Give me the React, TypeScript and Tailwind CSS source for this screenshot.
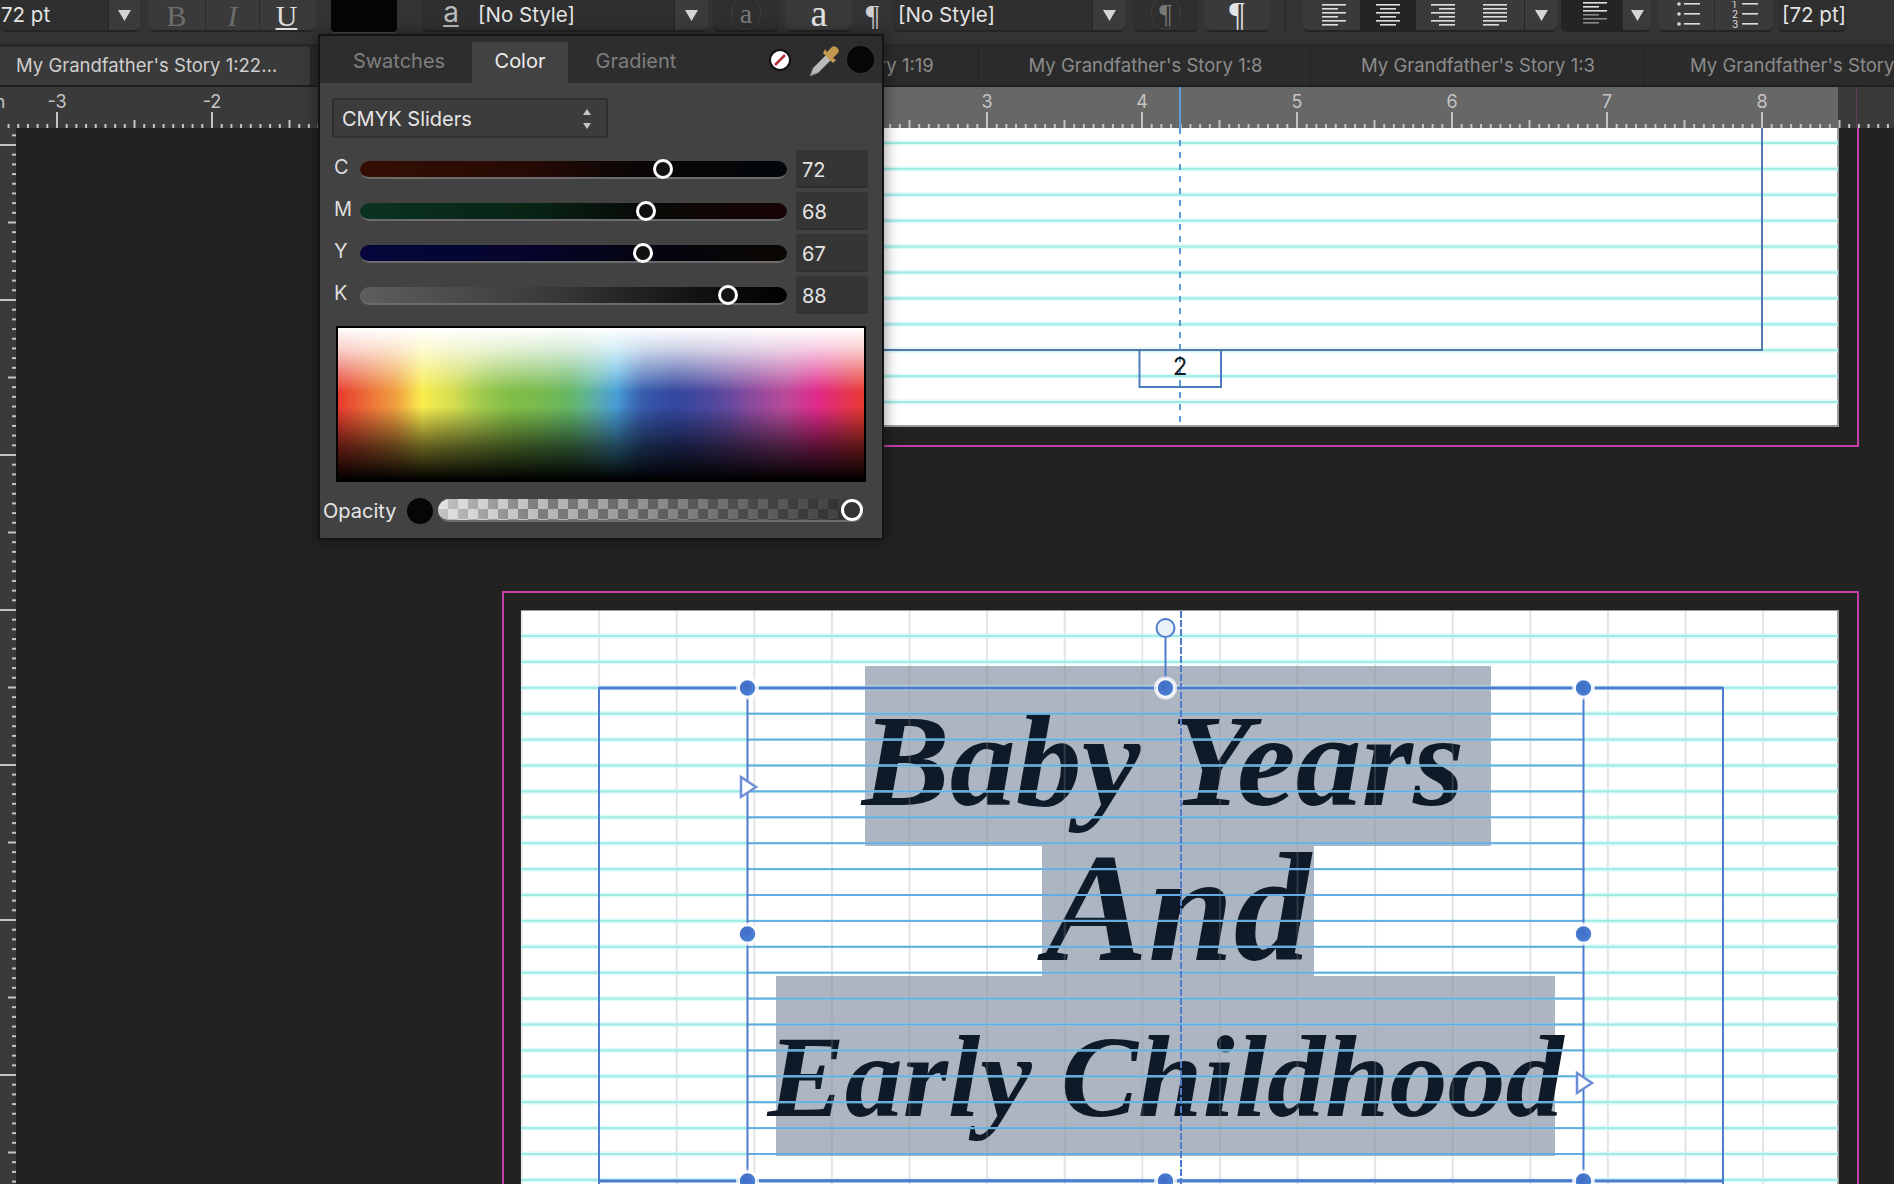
import { ReactNode } from 'react'

const UNIT = 155
const ORIGIN_X = 522
const ORIGIN_Y = 145
const STEP = UNIT / 16

const sans = 'font-["Inter","Liberation_Sans",sans-serif]'
const serif = 'font-["Liberation_Serif",serif]'

function Arrow() {
  return (
    <svg width="13" height="11" viewBox="0 0 13 11">
      <path d="M0 0h13L6.5 11z" fill="#d4d4d4" />
    </svg>
  )
}

function ArrowBox({ width, className = 'bg-[#3b3b3b]' }: { width: string; className?: string }) {
  return (
    <div className={`flex h-full flex-none items-center justify-center border-l border-[#262626] ${className} ${width}`}>
      <Arrow />
    </div>
  )
}

function Group({ className, children }: { className: string; children: ReactNode }) {
  return (
    <div className={`flex h-[32px] flex-none overflow-hidden rounded-b-md border-b-2 border-[#242424] ${className}`}>
      {children}
    </div>
  )
}

const leftRows = [[0, 24], [0, 16], [0, 24], [0, 16], [0, 24], [0, 16]]
const centerRows = [[0, 24], [4, 16], [0, 24], [4, 16], [0, 24], [4, 16]]
const rightRows = [[0, 24], [8, 16], [0, 24], [8, 16], [0, 24], [8, 16]]
const justifyRows = [[0, 24], [0, 24], [0, 24], [0, 24], [0, 24], [0, 16]]

function AlignIcon({ rows, fade }: { rows: number[][]; fade?: boolean }) {
  return (
    <svg width="24" height="26" viewBox="0 0 24 26">
      {rows.map(([x, w], i) => (
        <rect key={i} x={x} y={(fade ? 0 : 2) + i * 4} width={w} height="1.6" fill={fade && i > 2 ? '#8a8a8a' : '#dedede'} />
      ))}
    </svg>
  )
}

function ListIcon({ numbered }: { numbered?: boolean }) {
  return (
    <svg width="30" height="28" viewBox="0 0 30 28">
      {[2, 12, 22].map((y, i) => (
        <g key={y}>
          {numbered ? (
            <text x="3" y={y + 5} fontSize="10" fill="#dcdcdc" fontFamily="Inter">
              {i + 1}
            </text>
          ) : (
            <circle cx="8" cy={y + 1} r="1.8" fill="#dcdcdc" />
          )}
          <rect x="13" y={y} width="16" height="1.6" fill="#dedede" />
        </g>
      ))}
    </svg>
  )
}

function Ring({ children }: { children: ReactNode }) {
  return (
    <div className="mt-[-4px] flex h-[34px] w-[30px] flex-none items-center justify-center rounded-full border border-[#3e3e3e] pt-[2px]">
      {children}
    </div>
  )
}

function Toolbar() {
  return (
    <header className="flex h-[46px] flex-none items-start border-b-2 border-[#272727] bg-[#333333] text-[20.5px] text-[#e4e4e4]">
      <Group className="w-[140px] bg-[#2f2f2f]">
        <div className="flex-1 pl-[1px] leading-[29px]">72 pt</div>
        <ArrowBox width="w-[32px]" />
      </Group>
      <Group className="ml-[8px] w-[168px] bg-[#3a3a3a]">
        <div className={`flex w-[58px] items-center justify-center border-r border-[#2c2c2c] text-[30px] text-[#6c6c6c] ${serif}`}>B</div>
        <div className={`flex w-[54px] items-center justify-center border-r border-[#2c2c2c] text-[30px] italic text-[#6c6c6c] ${serif}`}>I</div>
        <div className={`flex w-[56px] items-center justify-center pr-[3px] text-[30px] text-[#dedede] underline decoration-2 underline-offset-2 ${serif}`}>U</div>
      </Group>
      <div className="ml-[15px] h-[33px] w-[66px] flex-none rounded-b-sm border-b border-[#4a4a4a] bg-[#050505]" />
      <Group className="ml-[25px] w-[286px] bg-[#2f2f2f]">
        <div className={`flex w-[56px] flex-none items-start justify-center pl-[2px] text-[28px] leading-[25px] text-[#b9b9b9] underline decoration-2 underline-offset-[3px] ${sans}`}>a</div>
        <div className="flex-1 leading-[29px]">[No Style]</div>
        <ArrowBox width="w-[34px]" />
      </Group>
      <Group className={`ml-[5px] w-[66px] items-center justify-center bg-[#2f2f2f] text-[28px] text-[#7a7a7a] ${serif}`}>
        <Ring>a</Ring>
      </Group>
      <Group className={`ml-[7px] w-[66px] items-center justify-center bg-[#3a3a3a] pb-[4px] text-[38px] text-[#e4e4e4] ${serif}`}>a</Group>
      <div className={`flex h-[28px] w-[41px] flex-none items-center justify-center text-[30px] text-[#cfcfcf] ${serif}`}>¶</div>
      <Group className="w-[232px] bg-[#2f2f2f]">
        <div className="flex-1 pl-[5px] leading-[29px]">[No Style]</div>
        <ArrowBox width="w-[33px]" />
      </Group>
      <Group className={`ml-[8px] w-[65px] items-center justify-center bg-[#2f2f2f] text-[28px] text-[#7a7a7a] ${serif}`}>
        <Ring>¶</Ring>
      </Group>
      <Group className={`ml-[6px] w-[66px] items-center justify-center bg-[#3a3a3a] pb-[3px] text-[34px] text-[#e4e4e4] ${serif}`}>¶</Group>
      <div className="ml-[15px] h-[32px] w-[1px] flex-none bg-[#262626]" />
      <Group className="ml-[17px] w-[254px] bg-[#3a3a3a]">
        <div className="flex w-[57px] items-center justify-center pl-[4px]"><AlignIcon rows={leftRows} /></div>
        <div className="flex w-[56px] items-center justify-center bg-[#242424]"><AlignIcon rows={centerRows} /></div>
        <div className="flex w-[54px] items-center justify-center"><AlignIcon rows={rightRows} /></div>
        <div className="flex w-[54px] items-center justify-center pr-[4px]"><AlignIcon rows={justifyRows} /></div>
        <ArrowBox width="w-[33px]" />
      </Group>
      <Group className="ml-[4px] w-[90px] bg-[#242424]">
        <div className="flex w-[61px] items-center justify-center pl-[6px]"><AlignIcon rows={leftRows} fade /></div>
        <ArrowBox width="w-[29px]" />
      </Group>
      <Group className="ml-[7px] w-[115px] bg-[#3a3a3a]">
        <div className="flex w-[57px] items-center justify-center border-r border-[#2c2c2c]"><ListIcon /></div>
        <div className="flex w-[58px] items-center justify-center"><ListIcon numbered /></div>
      </Group>
      <Group className="ml-[5px] flex-1 bg-[#2f2f2f] pl-[4px] leading-[29px]">[72 pt]</Group>
    </header>
  )
}

function TabStrip() {
  const tabs = [
    { label: '', width: 'w-[335px]' },
    { label: "My Grandfather's Story 1:19", width: 'w-[333px]' },
    { label: "My Grandfather's Story 1:8", width: 'w-[332px]' },
    { label: "My Grandfather's Story 1:3", width: 'w-[333px]' },
  ]
  return (
    <nav className="flex h-[41px] flex-none items-stretch border-b-2 border-[#1f1f1f] bg-[#2b2b2b] pt-[1px] text-[18.5px] whitespace-nowrap">
      <div className="flex w-[311px] flex-none items-center border-r border-[#222] bg-[#3a3a3a] pl-[16px] text-[#cfcfcf]">
        My Grandfather's Story 1:22…
      </div>
      {tabs.map((t, i) => (
        <div key={i} className={`flex flex-none items-center justify-center border-r border-[#222] pl-[2px] text-[#8c8c8c] ${t.width}`}>
          {t.label}
        </div>
      ))}
      <div className="flex min-w-0 flex-1 items-center overflow-hidden pl-[46px] text-[#8c8c8c]">My Grandfather's Story</div>
    </nav>
  )
}

function TopRuler() {
  const ticks = []
  for (let i = 0; i * STEP < 1894 + UNIT * 4; i++) {
    const x = ORIGIN_X - UNIT * 4 + i * STEP
    const top = i % 16 === 0 ? 25 : i % 8 === 0 ? 33 : 37
    ticks.push(<rect key={i} x={x - 1} y={top} width="2" height={41 - top} fill="#c4c4c4" />)
  }
  const labels = [-3, -2, -1, 0, 1, 2, 3, 4, 5, 6, 7, 8]
  return (
    <div className="relative h-[41px] flex-none bg-[#3a3a3a]">
      <div className="absolute left-[521px] top-0 h-[41px] w-[1317px] border-t-2 border-[#5c6668] bg-[#676767]" />
      <div className="absolute left-[1856px] top-0 h-[41px] w-[1px] bg-[#5b3f58]" />
      <svg width="1894" height="41" className="absolute left-0 top-0" fontFamily="Inter" fontSize="18" fill="#c4c4c4" textAnchor="middle">
        {ticks}
        {labels.map((n) => (
          <text key={n} x={ORIGIN_X + n * UNIT} y="21">
            {n}
          </text>
        ))}
        <text x="0" y="21">n</text>
        <rect x="1179" y="0" width="2" height="41" fill="#5f9bd6" />
      </svg>
    </div>
  )
}

function SideRuler() {
  const ticks = []
  for (let i = -16; i * STEP < 1100; i++) {
    const y = ORIGIN_Y - 128 + i * STEP
    const left = i % 16 === 0 ? 0 : i % 8 === 0 ? 8 : 12
    ticks.push(<rect key={i} x={left} y={y - 1} width={16 - left} height="2" fill="#c4c4c4" />)
  }
  return (
    <svg width="16" height="1056" className="flex-none bg-[#3a3a3a]">
      {ticks}
    </svg>
  )
}

function Canvas() {
  return (
    <main className="relative flex-1 overflow-hidden bg-[#222222]">
      <div className="absolute left-[485px] top-[-30px] h-[349px] w-[1358px] border-2 border-[#c23fa6]" />
      <div className="absolute left-[505px] top-0 h-[299px] w-[1318px] border-b-2 border-r-2 border-[#9a9a9a] bg-white" />
      <div className="absolute left-[486px] top-[463px] h-[640px] w-[1357px] border-2 border-[#c23fa6]" />
      <div className="absolute left-[505px] top-[482px] h-[600px] w-[1318px] border-r-2 border-t border-[#9a9a9a] bg-white">
        <div className={`flex flex-col items-start pt-[55px] font-bold italic leading-none text-[#0f1a28] whitespace-nowrap ${serif}`}>
          <div className="ml-[344px] flex h-[180px] w-[626px] items-center justify-center bg-[#adb5c2] pr-[30px] pt-[10px] text-[132px]">Baby Years</div>
          <div className="ml-[521px] flex h-[130px] w-[272px] items-center justify-center bg-[#adb5c2] pb-[6px] text-[154px]">And</div>
          <div className="ml-[255px] flex h-[180px] w-[779px] items-center justify-center bg-[#adb5c2] pt-[22px] text-[116px]">Early Childhood</div>
        </div>
      </div>
    </main>
  )
}

// guide lines, frames and handles sit over both pages, in page coordinates
function Guides() {
  const teal1 = Array.from({ length: 11 }, (_, i) => 143 + i * 25.9)
  const teal2 = Array.from({ length: 22 }, (_, i) => 636 + i * 25.9)
  const columns = Array.from({ length: 17 }, (_, i) => 521.5 + i * 77.6)
  const handles = [
    [747.5, 688], [1165.5, 688], [1583.5, 688],
    [747.5, 934], [1583.5, 934],
    [747.5, 1181], [1165.5, 1181], [1583.5, 1181],
  ]
  return (
    <svg width="1894" height="1184" className="pointer-events-none absolute left-0 top-0" fill="none">
      <defs>
        <radialGradient id="dot" cx="40%" cy="40%" r="70%">
          <stop offset="0%" stopColor="#3f6cc4" />
          <stop offset="100%" stopColor="#4d85d8" />
        </radialGradient>
      </defs>
      {/* top page */}
      {teal1.map((y) => (
        <g key={y}>
          <rect x="521" y={y - 2.5} width="1317" height="5" fill="#c8f7f5" opacity="0.6" />
          <rect x="521" y={y - 1} width="1317" height="2" fill="#a0ebe6" />
        </g>
      ))}
      <path d="M521 350H1762V128" stroke="#5578ae" strokeWidth="2" />
      <path d="M1139.5 350V387H1221V350" stroke="#4f7cc0" strokeWidth="2" />
      <path d="M1180 128V427" stroke="#5b9ad4" strokeWidth="2" strokeDasharray="6 6" />
      <text x="1180" y="375" textAnchor="middle" fontFamily="Inter" fontSize="24" fill="#141c28">
        2
      </text>
      {/* lower page */}
      {columns.map((x) => (
        <rect key={x} x={x - 1} y="611" width="2" height="573" fill="#8e929c" opacity="0.25" />
      ))}
      {teal2.map((y) =>
        y > 700 ? (
          <g key={y}>
            <rect x="521" y={y - 2.5} width="226" height="5" fill="#c8f7f5" opacity="0.6" />
            <rect x="1584" y={y - 2.5} width="254" height="5" fill="#c8f7f5" opacity="0.6" />
            <rect x="521" y={y - 1} width="1317" height="2" fill="#a0ebe6" />
            <rect x="747" y={y - 1} width="837" height="2" fill="#63ade2" />
          </g>
        ) : (
          <g key={y}>
            <rect x="521" y={y - 2.5} width="1317" height="5" fill="#c8f7f5" opacity="0.6" />
            <rect x="521" y={y - 1} width="1317" height="2" fill="#a0ebe6" />
          </g>
        ),
      )}
      <path d="M599 1184V688H1723V1184" stroke="#4f7ccc" strokeWidth="2" />
      <path d="M599 688H1723" stroke="#4f7ccc" strokeWidth="3" />
      <path d="M599 1181H1723" stroke="#4f7ccc" strokeWidth="3" />
      <path d="M747.5 688V1184M1583.5 688V1184" stroke="#4f7ccc" strokeWidth="2" />
      <path d="M1181 611V1184" stroke="#4f7ccc" strokeWidth="2" strokeDasharray="7 2" />
      <path d="M1165.5 638V688" stroke="#4f7ccc" strokeWidth="2" />
      <circle cx="1165.5" cy="628" r="9" fill="#eaf1fb" stroke="#4f7ccc" strokeWidth="2" />
      {handles.map(([x, y]) => (
        <g key={`${x}-${y}`}>
          <circle cx={x} cy={y} r="11.5" fill="#ffffff" opacity="0.75" />
          <circle cx={x} cy={y} r="8.5" fill="url(#dot)" stroke="#ffffff" strokeWidth="1.5" />
        </g>
      ))}
      <path d="M741 777L756 787L741 797Z" fill="#ffffff" stroke="#6e8fd8" strokeWidth="2.5" />
      <path d="M1577 1073L1592 1083L1577 1093Z" fill="#ffffff" stroke="#6e8fd8" strokeWidth="2.5" />
    </svg>
  )
}

function Eyedropper() {
  return (
    <svg width="36" height="36" viewBox="0 0 36 36">
      <path d="M2 34l3-8L18 13l5 5L10 31z" fill="#b9b9b9" stroke="#6f6f6f" strokeWidth="1" />
      <path d="M15 11l10 10 3-3-3-2 5-5c3-3-3-9-6-6l-5 5-2-3z" fill="#c4984f" />
    </svg>
  )
}

const sliders = [
  { label: 'C', value: '72', thumb: 'left-[293px]', track: 'bg-[linear-gradient(to_right,#340e05,#260a04_40%,#0a0605_65%,#01060a)]' },
  { label: 'M', value: '68', thumb: 'left-[276px]', track: 'bg-[linear-gradient(to_right,#0b3320,#082414_40%,#080b08_65%,#180203)]' },
  { label: 'Y', value: '67', thumb: 'left-[273px]', track: 'bg-[linear-gradient(to_right,#05053c,#05052c_40%,#040412_65%,#0a0600)]' },
  { label: 'K', value: '88', thumb: 'left-[358px]', track: 'bg-[linear-gradient(to_right,#5f5d5d,#3a3838_45%,#111_80%,#000)]' },
]

function ColorPanel() {
  return (
    <section className="absolute left-[318px] top-[34px] z-20 flex h-[506px] w-[566px] flex-col border-2 border-[#141414] bg-[#424242] text-[20px] shadow-[0_0_14px_rgba(0,0,0,0.45)]">
      <div className="flex h-[47px] flex-none items-end bg-[#2d2d2d] text-[#7f7f7f]">
        <div className="flex h-[41px] w-[152px] items-center justify-center pb-[3px] pl-[6px]">Swatches</div>
        <div className="flex h-[41px] w-[96px] items-center justify-center bg-[#424242] pb-[3px] text-[#ececec]">Color</div>
        <div className="flex h-[41px] w-[136px] items-center justify-center pb-[3px]">Gradient</div>
        <div className="mb-[1px] ml-[64px] flex h-[45px] items-center">
          <svg width="24" height="24" viewBox="0 0 24 24">
            <circle cx="12" cy="12" r="10" fill="#fff" stroke="#111" strokeWidth="2" />
            <path d="M7 17L17 7" stroke="#b03038" strokeWidth="2.5" />
          </svg>
          <div className="ml-[16px]"><Eyedropper /></div>
          <div className="ml-[1px] h-[31px] w-[31px] rounded-full border-2 border-[#2f2f2f] bg-[#060606]" />
        </div>
      </div>

      <div className="ml-[12px] mt-[15px] flex h-[40px] w-[276px] flex-none items-center justify-between rounded-[3px] border-2 border-[#2f2f2f] bg-[#3c3c3c] pl-[8px] pr-[14px] pt-[1px] text-[#e6e6e6]">
        CMYK Sliders
        <svg width="10" height="22" viewBox="0 0 10 22">
          <path d="M5 1l4 6H1zM5 21l4-6H1z" fill="#c4c4c4" />
        </svg>
      </div>

      <div className="mt-[12px] flex flex-col gap-[4px]">
        {sliders.map((s) => (
          <div key={s.label} className="flex h-[38px] items-center pl-[14px] pt-[2px]">
            <div className="w-[26px] pb-[6px] text-[#dedede]">{s.label}</div>
            <div className={`relative h-[18px] w-[427px] rounded-full border-b-2 border-[#6c6c6c] ${s.track}`}>
              <div className={`absolute top-[-2px] h-[20px] w-[20px] rounded-full border-[3px] border-white bg-[#111] ${s.thumb}`} />
            </div>
            <div className="ml-[9px] mt-[-2px] flex h-[38px] w-[72px] items-end rounded-[4px] border-b-2 border-[#2f2f2f] bg-[#353535] pb-[1px] pl-[6px] text-[#e6e6e6]">
              {s.value}
            </div>
          </div>
        ))}
      </div>

      <div className="ml-[16px] mt-[12px] h-[156px] w-[530px] flex-none border-2 border-black bg-[linear-gradient(to_bottom,#fff_0%,rgba(255,255,255,0.75)_14%,rgba(255,255,255,0)_42%,rgba(0,0,0,0)_52%,rgba(0,0,0,0.6)_78%,#000_100%),radial-gradient(ellipse_16%_42%_at_62%_55%,rgba(51,71,158,0.6),rgba(51,71,158,0)),radial-gradient(ellipse_12%_30%_at_34%_42%,rgba(120,185,70,0.7),rgba(120,185,70,0)),linear-gradient(to_right,#e83a30_0%,#f0a040_11%,#f9ec4e_16%,#c0d650_25%,#86c14a_34%,#62b568_44%,#60b8a8_49%,#4fb8e6_53%,#3a6ab5_58%,#33479e_64%,#6a4a9e_74%,#b84a9a_85%,#e0298a_91%,#e83a30_100%)]" />

      <div className="mt-[17px] flex h-[23px] flex-none items-center pl-[3px] text-[#e6e6e6]">
        <div className="w-[84px]">Opacity</div>
        <div className="h-[26px] w-[26px] flex-none rounded-full bg-[#060606]" />
        <div className="relative ml-[5px] h-[23px] w-[426px] rounded-full border-b-2 border-[#6c6c6c] bg-[linear-gradient(to_right,rgba(255,255,255,0.55),rgba(255,255,255,0)_22%,rgba(30,30,30,0.85)),conic-gradient(#808080_25%,#c0c0c0_0_50%,#808080_0_75%,#c0c0c0_0)] bg-[length:100%_100%,20px_20px]">
          <div className="absolute left-[403px] top-0 h-[22px] w-[22px] rounded-full border-[3px] border-white bg-[#333]" />
        </div>
      </div>
    </section>
  )
}

export default function App() {
  return (
    <div className={`relative flex h-[1184px] w-[1894px] flex-col overflow-hidden bg-[#222222] ${sans}`}>
      <Toolbar />
      <TabStrip />
      <TopRuler />
      <div className="flex flex-1">
        <SideRuler />
        <Canvas />
      </div>
      <Guides />
      <ColorPanel />
    </div>
  )
}
